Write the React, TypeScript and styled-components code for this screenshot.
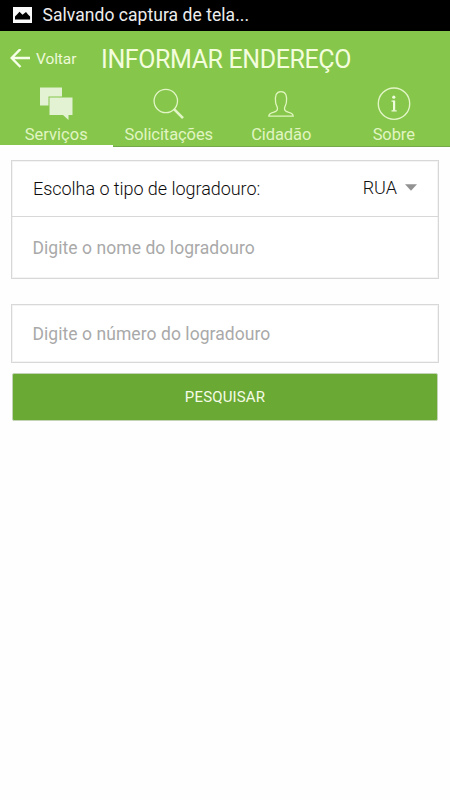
import React from "react";
import styled, { createGlobalStyle } from "styled-components";

const GlobalStyle = createGlobalStyle`
  * { box-sizing: border-box; }
  body { margin: 0; background: #fff; font-family: Roboto, "Liberation Sans", sans-serif; }
  button, input { font: inherit; border: 0; padding: 0; margin: 0; background: none; }
`;

const Screen = styled.div`
  display: flex;
  flex-direction: column;
  width: 450px;
  height: 800px;
  overflow: hidden;
  background: #fefefe;
`;

const StatusBar = styled.div`
  display: flex;
  align-items: center;
  gap: 10.5px;
  height: 31px;
  padding-left: 13px;
  padding-bottom: 1px;
  background: #000;
  color: #ededed;
  font-size: 17.5px;
  letter-spacing: 0.05px;
  white-space: nowrap;
  svg { display: block; }
`;

const Header = styled.header`
  display: flex;
  align-items: center;
  height: 55px;
  padding-left: 10px;
  background: #86c64b;
`;

const BackButton = styled.button`
  display: flex;
  align-items: center;
  gap: 6px;
  width: 91px;
  color: #edf9d8;
  font-size: 15.5px;
  letter-spacing: -0.1px;
  white-space: nowrap;
`;

const Title = styled.h1`
  margin: 2px 0 0;
  color: #f3fddd;
  font-size: 25px;
  font-weight: 400;
  letter-spacing: -0.4px;
  line-height: 30px;
  white-space: nowrap;
`;

const Tabs = styled.nav`
  display: grid;
  grid-template-columns: 112.5px 112.5px 112.5px 112.5px;
  height: 61px;
  background: #86c64b;
`;

const Tab = styled.button<{ $active?: boolean }>`
  display: flex;
  flex-direction: column;
  align-items: center;
  height: 61px;
  border-bottom: ${(p) => (p.$active ? "2px solid #fff" : "1px solid #73a94a")};
  color: #e0f5c2;
  svg { display: block; flex: none; }
`;

const TabLabel = styled.span<{ $spacing: number }>`
  margin-top: 1px;
  font-size: 16.5px;
  line-height: 22px;
  letter-spacing: ${(p) => p.$spacing}px;
  white-space: nowrap;
`;

const Form = styled.form`
  display: flex;
  flex-direction: column;
  padding: 13px 11px 0;
`;

const Group = styled.div`
  border: 1px solid #d8d8d8;
  background: #fff;
  box-shadow: inset 0 0 0 1px #f4f4f4;
  & + & { margin-top: 25px; }
`;

const TypeRow = styled.div`
  display: flex;
  align-items: center;
  justify-content: space-between;
  height: 56px;
  padding: 0 20px 0 21px;
  border-bottom: 1px solid #d8d8d8;
  color: #0c0c0c;
  font-size: 18px;
  font-weight: 300;
`;

const TypeLabel = styled.span`
  letter-spacing: -0.04px;
`;

const Picker = styled.button`
  display: flex;
  align-items: center;
  gap: 8px;
  padding: 0 1px 2px 0;
  color: #111;
`;

const Field = styled.input<{ $height: number }>`
  display: block;
  width: 100%;
  height: ${(p) => p.$height}px;
  padding: 1px 20px 0 20.5px;
  outline: none;
  color: #303030;
  font-size: 17.5px;
  letter-spacing: 0.06px;
  &::placeholder { color: #a9a9a9; opacity: 1; }
`;

const Submit = styled.button`
  height: 48px;
  margin: 10px 1px 0;
  border: 1px solid #c3d3b5;
  border-radius: 2px;
  background: #6aa933;
  color: #f3fbe6;
  font-size: 15px;
  letter-spacing: 0.15px;
`;

const PictureIcon = () => (
  <svg width="19" height="16" viewBox="0 0 19 16">
    <rect width="19" height="16" fill="#fafafa" />
    <path d="M2 12.5V9.5L4 7.5 6.5 4.8l3 3L13 5l2 2.5 2.1 2v3z" fill="#000" />
  </svg>
);

const ArrowIcon = () => (
  <svg width="20" height="20" viewBox="0 0 20 20" fill="none" stroke="#f6ffe7" strokeWidth="2.4">
    <path d="M1.5 9H20M10.5 0L1.7 9l8.8 9" />
  </svg>
);

const ChatIcon = () => (
  <svg width="34" height="37" viewBox="0 0 34 37">
    <path d="M1 1.5H23v18H1z" fill="#e2f2d2" />
    <path d="M9.5 10.5h25v20h-25z" fill="#86c64b" />
    <path d="M10.5 11.5H33.5v17.5h-4v5l-5.5-5H10.5z" fill="#e2f2d2" />
  </svg>
);

const SearchIcon = () => (
  <svg width="34" height="37" viewBox="0 0 34 37" fill="none" stroke="#e1f5c7">
    <circle cx="13.8" cy="15" r="11.7" strokeWidth="1.3" />
    <path d="M22 23.2l9 8.9" strokeWidth="2.6" />
  </svg>
);

const PersonIcon = () => (
  <svg width="34" height="37" viewBox="0 0 34 37" fill="none" stroke="#e0f6bf" strokeWidth="1.3">
    <path d="M4.8 30.2c0-2.5 2-3.3 4.5-3.9 3.6-.9 4.3-1.8 4.2-3.8 0-1.8-1.5-3.1-1.9-6.2C10.9 10 12 5.6 17 5.6s6.1 4.4 5.4 10.7c-.4 3.1-1.9 4.4-1.9 6.2-.1 2 .6 2.9 4.2 3.8 2.5.6 4.5 1.4 4.5 3.9z" />
  </svg>
);

const InfoIcon = () => (
  <svg width="34" height="37" viewBox="0 0 34 37" fill="none">
    <circle cx="17" cy="17.7" r="15.7" stroke="#e1f5c5" strokeWidth="1.4" />
    <circle cx="16.8" cy="11.2" r="1.6" fill="#eefbdc" />
    <path d="M14.5 15.2h3.3M14.5 24.8h5.2" stroke="#eefbdc" strokeWidth="1.2" />
    <path d="M17.1 14.7v10" stroke="#eefbdc" strokeWidth="2.2" />
  </svg>
);

const CaretIcon = () => (
  <svg width="12" height="7" viewBox="0 0 12 7">
    <path d="M0 .3h12L6 6.8z" fill="#929292" />
  </svg>
);

const tabs = [
  { label: "Serviços", icon: <ChatIcon />, spacing: 0, active: true },
  { label: "Solicitações", icon: <SearchIcon />, spacing: -0.08 },
  { label: "Cidadão", icon: <PersonIcon />, spacing: -0.1 },
  { label: "Sobre", icon: <InfoIcon />, spacing: -0.1 },
];

export default function App() {
  return (
    <>
      <GlobalStyle />
      <Screen>
        <StatusBar>
          <PictureIcon />
          <span>Salvando captura de tela...</span>
        </StatusBar>
        <Header>
          <BackButton type="button">
            <ArrowIcon />
            Voltar
          </BackButton>
          <Title>INFORMAR ENDEREÇO</Title>
        </Header>
        <Tabs>
          {tabs.map((t) => (
            <Tab key={t.label} type="button" $active={t.active}>
              {t.icon}
              <TabLabel $spacing={t.spacing}>{t.label}</TabLabel>
            </Tab>
          ))}
        </Tabs>
        <Form>
          <Group>
            <TypeRow>
              <TypeLabel>Escolha o tipo de logradouro:</TypeLabel>
              <Picker type="button">
                RUA
                <CaretIcon />
              </Picker>
            </TypeRow>
            <Field $height={61} placeholder="Digite o nome do logradouro" />
          </Group>
          <Group>
            <Field $height={57} placeholder="Digite o número do logradouro" />
          </Group>
          <Submit type="button">PESQUISAR</Submit>
        </Form>
      </Screen>
    </>
  );
}
